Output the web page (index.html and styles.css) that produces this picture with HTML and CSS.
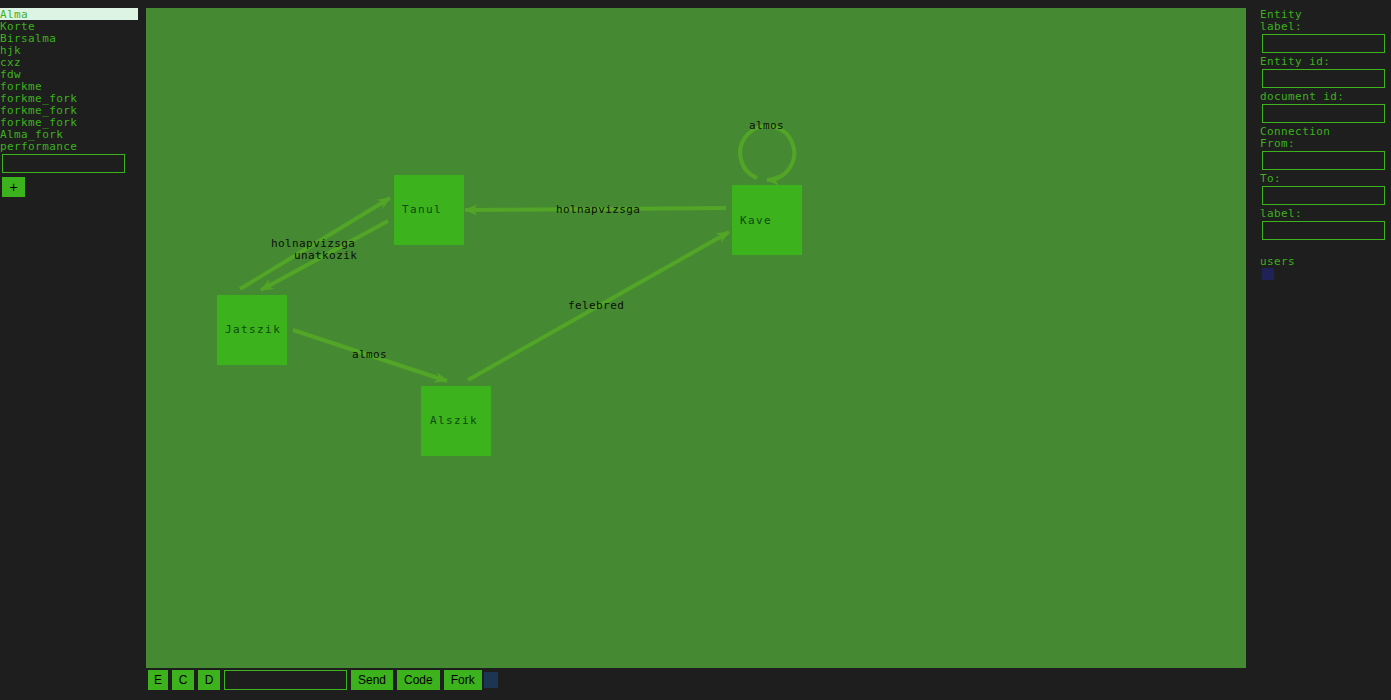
FILE: index.html
```html
<!DOCTYPE html>
<html>
<head>
<meta charset="utf-8">
<link rel="stylesheet" href="styles.css">
</head>
<body>
<div class="app">
  <div class="sidebar">
    <ul class="docs">
      <li class="doc active">Alma</li>
      <li class="doc">Korte</li>
      <li class="doc">Birsalma</li>
      <li class="doc">hjk</li>
      <li class="doc">cxz</li>
      <li class="doc">fdw</li>
      <li class="doc">forkme</li>
      <li class="doc">forkme_fork</li>
      <li class="doc">forkme_fork</li>
      <li class="doc">forkme_fork</li>
      <li class="doc">Alma_fork</li>
      <li class="doc">performance</li>
    </ul>
    <input class="field" type="text">
    <button class="plus">+</button>
  </div>
  <div class="main">
    <div class="canvas">
      <svg class="graph" width="1100" height="660" viewBox="0 0 1100 660">
        <defs>
          <marker id="arr" markerUnits="userSpaceOnUse" markerWidth="14" markerHeight="14" refX="12" refY="7" orient="auto">
            <path d="M0,1.5 L13,7 L0,12.5 L3.5,7 Z" fill="#52a527"/>
          </marker>
        </defs>
        <g class="edges">
          <line x1="94" y1="281" x2="244" y2="190" marker-end="url(#arr)"/>
          <line x1="242" y1="213" x2="115" y2="282" marker-end="url(#arr)"/>
          <line x1="580" y1="200" x2="319" y2="202" marker-end="url(#arr)"/>
          <line x1="147" y1="322" x2="301" y2="373" marker-end="url(#arr)"/>
          <line x1="322" y1="372" x2="583" y2="224" marker-end="url(#arr)"/>
          <path d="M611,170 A27,27 0 1 1 621,172" marker-end="url(#arr)"/>
        </g>
        <g class="nodes">
          <rect x="248" y="167" width="70" height="70"/>
          <rect x="71" y="287" width="70" height="70"/>
          <rect x="275" y="378" width="70" height="70"/>
          <rect x="586" y="177" width="70" height="70"/>
        </g>
        <g class="node-labels">
          <text x="256" y="205">Tanul</text>
          <text x="79" y="325">Jatszik</text>
          <text x="284" y="416">Alszik</text>
          <text x="594" y="216">Kave</text>
        </g>
        <g class="edge-labels">
          <text x="125" y="239">holnapvizsga</text>
          <text x="148" y="251">unatkozik</text>
          <text x="410" y="205">holnapvizsga</text>
          <text x="206" y="350">almos</text>
          <text x="422" y="301">felebred</text>
          <text x="603" y="121">almos</text>
        </g>
      </svg>
    </div>
    <div class="toolbar">
      <button class="btn narrow">E</button>
      <button class="btn letter">C</button>
      <button class="btn letter">D</button>
      <input class="field" type="text">
      <button class="btn">Send</button>
      <button class="btn">Code</button>
      <button class="btn">Fork</button>
      <span class="status"></span>
    </div>
  </div>
  <div class="panel">
    <div class="lbl">Entity</div>
    <div class="lbl">label:</div>
    <input class="field" type="text">
    <div class="lbl">Entity id:</div>
    <input class="field" type="text">
    <div class="lbl">document id:</div>
    <input class="field" type="text">
    <div class="lbl">Connection</div>
    <div class="lbl">From:</div>
    <input class="field" type="text">
    <div class="lbl">To:</div>
    <input class="field" type="text">
    <div class="lbl">label:</div>
    <input class="field" type="text">
    <div class="lbl users">users</div>
    <span class="user"></span>
  </div>
</div>
</body>
</html>
```
FILE: styles.css
```css
html, body {
  margin: 0;
  padding: 0;
  background: #1e1e1e;
  height: 100%;
}
body {
  font-family: "DejaVu Sans Mono", "Liberation Mono", monospace;
  font-size: 11px;
  line-height: 12px;
  letter-spacing: 0.4px;
  color: #3cb21d;
  overflow: hidden;
}
.app {
  display: flex;
  align-items: flex-start;
  padding-top: 8px;
}
.sidebar {
  width: 138px;
  flex: none;
  display: flex;
  flex-direction: column;
  align-items: flex-start;
}
.docs {
  list-style: none;
  margin: 0;
  padding: 0;
  width: 138px;
}
.doc {
  box-sizing: border-box;
  height: 12px;
  padding-top: 1px;
  line-height: 11px;
  white-space: nowrap;
}
.doc.active {
  background: #ddf3e3;
}
.field {
  box-sizing: border-box;
  width: 123px;
  height: 19px;
  margin: 2px 0 0 2px;
  padding: 0 2px;
  background: #1e1e1e;
  border: 1px solid #3cb21d;
  border-radius: 0;
  outline: none;
  color: #3cb21d;
  font: inherit;
  display: block;
}
.plus {
  margin: 4px 0 0 2px;
  width: 23px;
  height: 20px;
  padding: 0;
  border: none;
  background: #3cb21d;
  color: #000;
  font-family: "Liberation Sans", Arial, sans-serif;
  font-size: 14px;
  line-height: 20px;
}
.main {
  margin-left: 8px;
  width: 1100px;
  flex: none;
  display: flex;
  flex-direction: column;
}
.canvas {
  width: 1100px;
  height: 660px;
  background: #458a32;
}
.graph {
  display: block;
}
.edges line, .edges path {
  stroke: #52a527;
  stroke-width: 4;
  fill: none;
}
.nodes rect {
  fill: #3cb21d;
}
.node-labels text {
  font-family: "DejaVu Sans Mono", monospace;
  font-size: 11px;
  letter-spacing: 1.4px;
  fill: #0c4a10;
}
.edge-labels text {
  font-family: "DejaVu Sans Mono", monospace;
  font-size: 11px;
  letter-spacing: 0.4px;
  fill: #0a0f08;
}
.toolbar {
  display: flex;
  align-items: center;
  gap: 4px;
  margin-top: 2px;
  padding-left: 2px;
}
.toolbar .field {
  margin: 0;
  height: 20px;
}
.btn {
  height: 20px;
  padding: 0 7px;
  border: none;
  background: #3cb21d;
  color: #000;
  font-family: "Liberation Sans", Arial, sans-serif;
  font-size: 12px;
  letter-spacing: 0;
  line-height: 20px;
}
.btn.narrow {
  width: 20px;
  padding: 0;
}
.btn.letter {
  width: 22px;
  padding: 0;
}
.status {
  width: 14px;
  height: 16px;
  margin-left: -2px;
  background: #1c3553;
}
.panel {
  margin-left: 14px;
  width: 130px;
  flex: none;
  display: flex;
  flex-direction: column;
  align-items: flex-start;
}
.panel .field {
  margin-bottom: 2px;
}
.lbl {
  box-sizing: border-box;
  height: 12px;
  padding-top: 1px;
  line-height: 11px;
  white-space: nowrap;
}
.lbl.users {
  margin-top: 13px;
}
.user {
  display: block;
  width: 12px;
  height: 12px;
  margin: 1px 0 0 2px;
  background: #1e2257;
}
```
